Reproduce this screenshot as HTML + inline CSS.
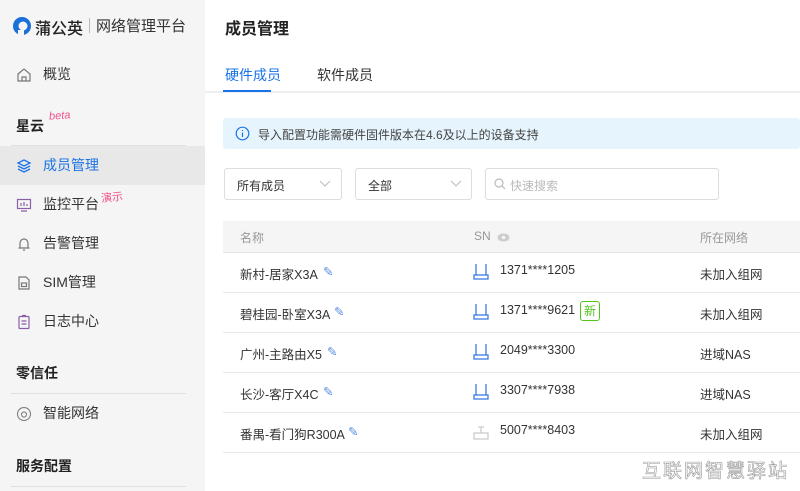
<!DOCTYPE html>
<html><head><meta charset="utf-8"><style>
*{margin:0;padding:0;box-sizing:border-box}
body{width:800px;height:491px;overflow:hidden;background:#fff;font-family:"Liberation Sans","Noto Sans CJK SC",sans-serif;color:#333;position:relative;font-size:13px}
.a{position:absolute}
#sb{left:0;top:0;width:205px;height:491px;background:#f5f5f5}
.it{left:0;width:205px;height:39px;line-height:39px;padding-left:43px;font-size:14px;color:#333}
.ic{position:absolute;left:16px;top:12px}
.sec{left:16px;font-size:14px;font-weight:bold;color:#222}
.hl{left:11px;width:175px;height:1px;background:#e0e0e0}
.row{left:223px;width:577px;height:40px;border-bottom:1px solid #e8e8e8;font-size:12.5px;color:#333}
.row span{position:absolute;top:11px}
</style></head><body>
<div id="sb" class="a">
 <svg class="a" style="left:12px;top:16px" width="20" height="20" viewBox="0 0 20 20"><circle cx="10" cy="10" r="9" fill="#1a6fd9"/><circle cx="11" cy="10" r="4.5" fill="#f5f5f5"/><rect x="6" y="14" width="6" height="6" fill="#f5f5f5"/></svg>
 <div class="a" style="left:35px;top:15px;font-size:16px;font-weight:500;color:#222">蒲公英</div>
 <div class="a" style="left:89px;top:18px;width:1px;height:15px;background:#bbb"></div>
 <div class="a" style="left:96px;top:15px;font-size:15px;color:#333">网络管理平台</div>
 <div class="a it" style="top:55px"><svg class="ic" width="16" height="16" viewBox="0 0 16 16" fill="none" stroke="#777" stroke-width="1.2"><path d="M2 7L8 2l6 5v7H2z"/><path d="M6 14v-4h4v4"/></svg>概览</div>
 <div class="a sec" style="top:116px">星云</div>
 <div class="a" style="left:49px;top:110px;font-size:11px;color:#f0508a;font-style:italic;transform:rotate(-4deg)">beta</div>
 <div class="a hl" style="top:145px"></div>
 <div class="a it" style="top:146px;background:#e8e8e8;color:#1a73e8"><svg class="ic" width="16" height="16" viewBox="0 0 16 16" fill="none" stroke="#1a73e8" stroke-width="1.3"><path d="M8 2l6 3-6 3-6-3z"/><path d="M2 8l6 3 6-3"/><path d="M2 11l6 3 6-3"/></svg>成员管理</div>
 <div class="a it" style="top:185px"><svg class="ic" width="16" height="16" viewBox="0 0 16 16" fill="none" stroke="#8a5fa8" stroke-width="1.2"><rect x="1.5" y="2.5" width="13" height="9"/><path d="M5 9V6M8 9V5M11 9V7M5 14h6"/></svg>监控平台</div>
 <div class="a" style="left:101px;top:189px;font-size:11px;color:#f0508a;transform:rotate(-6deg)">演示</div>
 <div class="a it" style="top:224px"><svg class="ic" width="16" height="16" viewBox="0 0 16 16" fill="none" stroke="#777" stroke-width="1.2"><path d="M4 12V7a4 4 0 018 0v5zM2.5 12h11M7 14h2"/></svg>告警管理</div>
 <div class="a it" style="top:263px"><svg class="ic" width="16" height="16" viewBox="0 0 16 16" fill="none" stroke="#777" stroke-width="1.2"><path d="M3 2h7l3 3v9H3z"/><rect x="5.5" y="8" width="5" height="3.5"/></svg>SIM管理</div>
 <div class="a it" style="top:302px"><svg class="ic" width="16" height="16" viewBox="0 0 16 16" fill="none" stroke="#8a5fa8" stroke-width="1.2"><rect x="3" y="2.5" width="10" height="12" rx="1"/><path d="M6 1.5h4M5.5 7h5M5.5 10h5"/></svg>日志中心</div>
 <div class="a sec" style="top:363px">零信任</div>
 <div class="a hl" style="top:393px"></div>
 <div class="a it" style="top:394px"><svg class="ic" width="16" height="16" viewBox="0 0 16 16" fill="none" stroke="#888" stroke-width="1.2"><circle cx="8" cy="8" r="6.5"/><circle cx="8" cy="8.5" r="2.5"/></svg>智能网络</div>
 <div class="a sec" style="top:456px">服务配置</div>
 <div class="a hl" style="top:486px"></div>
</div>
<div class="a" style="left:225px;top:15px;font-size:16px;font-weight:bold;color:#222">成员管理</div>
<div class="a" style="left:205px;top:91px;width:595px;height:2px;background:#eee"></div>
<div class="a" style="left:225px;top:65px;font-size:14px;color:#1a73e8">硬件成员</div>
<div class="a" style="left:223px;top:90px;width:48px;height:2px;background:#1a73e8"></div>
<div class="a" style="left:305px;top:65px;width:80px;text-align:center;font-size:14px;color:#333">软件成员</div>
<div class="a" style="left:223px;top:118px;width:577px;height:31px;background:#e6f5fd;border-radius:3px"></div>
<svg class="a" style="left:235px;top:126px" width="15" height="15" viewBox="0 0 15 15" fill="none" stroke="#1a73e8" stroke-width="1.2"><circle cx="7.5" cy="7.5" r="6.3"/><path d="M7.5 6.5v4.5M7.5 4v1"/></svg>
<div class="a" style="left:258px;top:126px;font-size:12px;color:#444">导入配置功能需硬件固件版本在4.6及以上的设备支持</div>
<div class="a" style="left:224px;top:168px;width:118px;height:32px;border:1px solid #ddd;border-radius:3px"></div>
<div class="a" style="left:237px;top:177px;font-size:12px">所有成员</div>
<svg class="a" style="left:319px;top:180px" width="12" height="8" viewBox="0 0 12 8" fill="none" stroke="#bbb"><path d="M1 1l5 5 5-5"/></svg>
<div class="a" style="left:355px;top:168px;width:117px;height:32px;border:1px solid #ddd;border-radius:3px"></div>
<div class="a" style="left:368px;top:177px;font-size:12px">全部</div>
<svg class="a" style="left:450px;top:180px" width="12" height="8" viewBox="0 0 12 8" fill="none" stroke="#bbb"><path d="M1 1l5 5 5-5"/></svg>
<div class="a" style="left:485px;top:168px;width:234px;height:32px;border:1px solid #ddd;border-radius:3px"></div>
<svg class="a" style="left:494px;top:178px" width="12" height="12" viewBox="0 0 12 12" fill="none" stroke="#bbb" stroke-width="1.2"><circle cx="5" cy="5" r="4"/><path d="M8 8l3 3"/></svg>
<div class="a" style="left:510px;top:177px;font-size:12px;color:#bbb">快速搜索</div>
<div class="a" style="left:223px;top:221px;width:577px;height:32px;background:#f5f5f5;border-bottom:1px solid #e4e4e4"></div>
<div class="a" style="left:240px;top:229px;font-size:12px;color:#999">名称</div>
<div class="a" style="left:474px;top:229px;font-size:12px;color:#999">SN</div>
<svg class="a" style="left:497px;top:233px" width="13" height="9" viewBox="0 0 13 9"><ellipse cx="6.5" cy="4.5" rx="6" ry="4" fill="#ccc"/><circle cx="6.5" cy="4.5" r="1.8" fill="#f5f5f5"/></svg>
<div class="a" style="left:700px;top:229px;font-size:12px;color:#999">所在网络</div>

<div class="a row" style="top:253px"><span style="left:17px">新村-居家X3A</span><span style="left:100px;color:#5b8fe0">✎</span><span style="left:277px;top:10px">1371****1205</span><span style="left:477px">未加入组网</span></div>
<div class="a row" style="top:293px"><span style="left:17px">碧桂园-卧室X3A</span><span style="left:111px;color:#5b8fe0">✎</span><span style="left:277px;top:10px">1371****9621</span><span style="left:357px;top:8px;border:1px solid #52c41a;color:#52c41a;border-radius:3px;padding:0 3px;font-size:12px;line-height:18px">新</span><span style="left:477px">未加入组网</span></div>
<div class="a row" style="top:333px"><span style="left:17px">广州-主路由X5</span><span style="left:104px;color:#5b8fe0">✎</span><span style="left:277px;top:10px">2049****3300</span><span style="left:477px">进域NAS</span></div>
<div class="a row" style="top:373px"><span style="left:17px">长沙-客厅X4C</span><span style="left:100px;color:#5b8fe0">✎</span><span style="left:277px;top:10px">3307****7938</span><span style="left:477px">进域NAS</span></div>
<div class="a row" style="top:413px"><span style="left:17px">番禺-看门狗R300A</span><span style="left:125px;color:#5b8fe0">✎</span><span style="left:277px;top:10px">5007****8403</span><span style="left:477px">未加入组网</span></div>
<svg class="a" style="left:473px;top:263px" width="16" height="18" viewBox="0 0 16 18" fill="none" stroke="#3a7de0" stroke-width="1.3"><path d="M3 1v11M13 1v11"/><rect x="1" y="12" width="14" height="4"/></svg>
<svg class="a" style="left:473px;top:303px" width="16" height="18" viewBox="0 0 16 18" fill="none" stroke="#3a7de0" stroke-width="1.3"><path d="M3 1v11M13 1v11"/><rect x="1" y="12" width="14" height="4"/></svg>
<svg class="a" style="left:473px;top:343px" width="16" height="18" viewBox="0 0 16 18" fill="none" stroke="#3a7de0" stroke-width="1.3"><path d="M3 1v11M13 1v11"/><rect x="1" y="12" width="14" height="4"/></svg>
<svg class="a" style="left:473px;top:383px" width="16" height="18" viewBox="0 0 16 18" fill="none" stroke="#3a7de0" stroke-width="1.3"><path d="M3 1v11M13 1v11"/><rect x="1" y="12" width="14" height="4"/></svg>
<svg class="a" style="left:473px;top:423px" width="16" height="18" viewBox="0 0 16 18" fill="none" stroke="#ccc" stroke-width="1.3"><path d="M8 4v6M5 4h6"/><rect x="1" y="10" width="14" height="6"/></svg>
<div class="a" style="left:642px;top:456px;font-size:19px;color:#fff;-webkit-text-stroke:0.6px #999;letter-spacing:2px">互联网智慧驿站</div>
</body></html>
